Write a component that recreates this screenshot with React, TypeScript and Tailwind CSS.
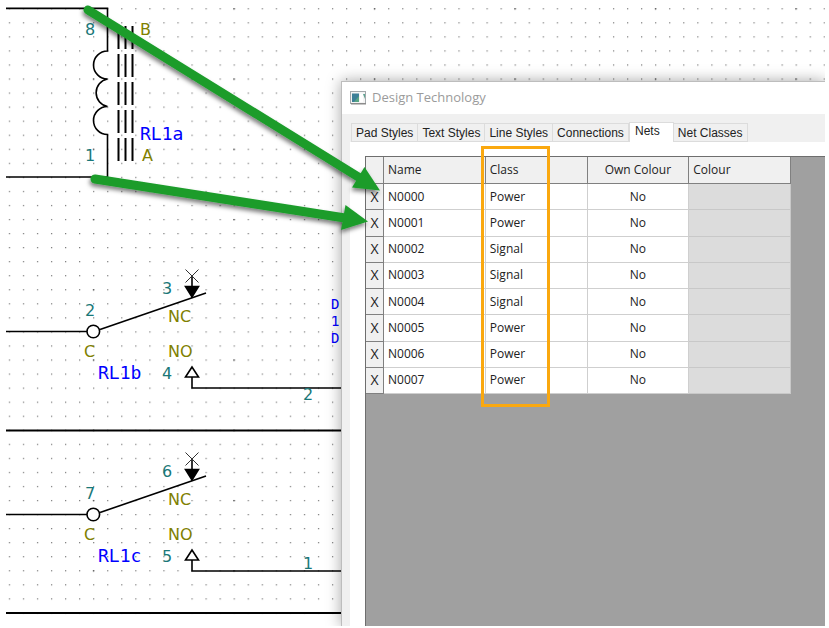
import React from 'react';

interface Net {
  name: string;
  netClass: string;
  ownColour: string;
}

const NETS: Net[] = [
  { name: 'N0000', netClass: 'Power', ownColour: 'No' },
  { name: 'N0001', netClass: 'Power', ownColour: 'No' },
  { name: 'N0002', netClass: 'Signal', ownColour: 'No' },
  { name: 'N0003', netClass: 'Signal', ownColour: 'No' },
  { name: 'N0004', netClass: 'Signal', ownColour: 'No' },
  { name: 'N0005', netClass: 'Power', ownColour: 'No' },
  { name: 'N0006', netClass: 'Power', ownColour: 'No' },
  { name: 'N0007', netClass: 'Power', ownColour: 'No' },
];

const TABS = ['Pad Styles', 'Text Styles', 'Line Styles', 'Connections', 'Nets', 'Net Classes'];

const PIN = 'fill-[#1a7878]';
const TERMINAL = 'fill-[#808000]';
const NAME = "fill-[#0000ff] font-['DejaVu_Sans_Mono',monospace] text-lg";
const CLIPPED_NAME = "fill-[#0000ff] font-['DejaVu_Sans_Mono',monospace] text-sm";

const CORE_BARS = [118.5, 125.5, 132.5];

interface ContactProps {
  y: number;
  name: string;
  common: string;
  closed: string;
  open: string;
}

// Changeover contact, drawn around its common pin at y
const Contact: React.FC<ContactProps> = ({ y, name, common, closed, open }) => {
  return (
    <g transform={`translate(0 ${y})`}>
      <g fill="none" stroke="#000" strokeWidth="1.6">
        <path d="M6 0.5H87" />
        <circle cx="93.3" cy="0.5" r="6.3" fill="#fff" />
        <path d="M100 -1.5L206 -38" />
        <path d="M192 -55V-33" />
        <path d="M185.5 -61.5L198.5 -48.5M198.5 -61.5L185.5 -48.5" stroke="#333" strokeWidth="1" />
        <path d="M185.5 -44.5H198.5L192 -34Z" fill="#000" />
        <path d="M192 36L185.5 46H198.5Z" fill="#fff" />
        <path d="M192 46V57H342" />
      </g>
      <text x="85" y="-15" className={PIN}>{common}</text>
      <text x="162" y="-37" className={PIN}>{closed}</text>
      <text x="162" y="48" className={PIN}>{open}</text>
      <text x="168" y="-9" className={TERMINAL}>NC</text>
      <text x="168" y="26" className={TERMINAL}>NO</text>
      <text x="84" y="26" className={TERMINAL}>C</text>
      <text x="98" y="48" className={NAME}>{name}</text>
    </g>
  );
};

const Schematic: React.FC = () => {
  return (
    <svg className="absolute inset-0 h-full w-full font-['DejaVu_Sans',sans-serif] text-base" aria-label="Schematic">
      <defs>
        <pattern id="grid" x="8.8" y="8.2" width="14.05" height="14.05" patternUnits="userSpaceOnUse">
          <rect width="1.2" height="1.2" fill="#777" />
        </pattern>
        <pattern id="gridMajor" x="92.8" y="8.2" width="140.5" height="70.25" patternUnits="userSpaceOnUse">
          <rect width="1.3" height="1.3" fill="#555" />
        </pattern>
      </defs>
      <rect x="6" y="8" width="820" height="618" fill="url(#grid)" />
      <rect x="6" y="8" width="820" height="618" fill="url(#gridMajor)" />

      {/* relay coil */}
      <g fill="none" stroke="#000" strokeWidth="1.6">
        <path d="M6 8.4H107.5V51A14 14 0 0 0 107.5 79A14 14 0 0 0 107.5 106.5A14 14 0 0 0 107.5 134.5V177H6" />
        {CORE_BARS.map((x) => (
          <path key={x} d={`M${x} 26V161`} strokeWidth="2" strokeDasharray="23 5" />
        ))}
      </g>
      <text x="85" y="35" className={PIN}>8</text>
      <text x="85" y="161" className={PIN}>1</text>
      <text x="140" y="35" className={TERMINAL}>B</text>
      <text x="142" y="161" className={TERMINAL}>A</text>
      <text x="140" y="140" className={NAME}>RL1a</text>

      <Contact y={331} name="RL1b" common="2" closed="3" open="4" />
      <Contact y={514} name="RL1c" common="7" closed="6" open="5" />
      <path d="M6 430.5H342M6 613H342" stroke="#000" strokeWidth="1.8" />

      <text x="303" y="400" className={PIN}>2</text>
      <text x="303" y="569" className={PIN}>1</text>
      <text x="331" y="309" className={CLIPPED_NAME}>D</text>
      <text x="331" y="326" className={CLIPPED_NAME}>1</text>
      <text x="331" y="343" className={CLIPPED_NAME}>D</text>
    </svg>
  );
};

const Arrows: React.FC = () => {
  return (
    <svg className="pointer-events-none absolute inset-0 h-full w-full" aria-hidden="true">
      <defs>
        <filter id="shadow" x="-10%" y="-10%" width="120%" height="130%">
          <feDropShadow dx="-1" dy="3" stdDeviation="2" floodColor="#000" floodOpacity="0.5" />
        </filter>
      </defs>
      <g fill="#1b9c2b" stroke="#1b9c2b" filter="url(#shadow)">
        <path d="M88 10L360 178" strokeWidth="9" strokeLinecap="round" />
        <path d="M380 190.5L364.5 167L352 187.5Z" stroke="none" />
        <path d="M95 179L345 218" strokeWidth="9" strokeLinecap="round" />
        <path d="M368 221.5L345.5 205L341 230Z" stroke="none" />
      </g>
    </svg>
  );
};

const WindowIcon: React.FC = () => {
  return (
    <svg width="16" height="14" viewBox="0 0 16 14" aria-hidden="true">
      <rect x="0.5" y="0.5" width="15" height="12" fill="#f4f4f4" stroke="#a3a8ab" />
      <rect x="1" y="12" width="15" height="1.5" fill="#8c8c8c" />
      <rect x="2" y="2.5" width="7" height="8.5" fill="#3c7f97" />
      <path d="M4 11L9 5V11Z" fill="#58a585" />
      <rect x="10" y="2.5" width="3" height="8.5" fill="#fff" />
      <path d="M13 3H15V8Z" fill="#5da391" />
    </svg>
  );
};

const NetsTable: React.FC = () => {
  const head = 'h-[27px] border-r border-b border-[#808080] bg-[#f0f0f0] px-1 font-normal';
  const cell = 'h-[26px] border-r border-b border-[#cfcfcf] bg-white px-1';

  return (
    <table className="h-[237px] w-[425px] table-fixed border-separate border-spacing-0 text-left font-['Open_Sans',sans-serif] text-xs text-[#222]">
      <colgroup>
        <col className="w-[18px]" />
        <col />
        <col />
        <col />
        <col />
      </colgroup>
      <thead>
        <tr>
          <th className={head} />
          <th className={head}>Name</th>
          <th className={head}>Class</th>
          <th className={`${head} text-center`}>Own Colour</th>
          <th className={head}>Colour</th>
        </tr>
      </thead>
      <tbody>
        {NETS.map((net) => (
          <tr key={net.name}>
            <td className="border-r border-b border-[#808080] bg-[#f0f0f0] text-center text-sm leading-4">X</td>
            <td className={cell}>{net.name}</td>
            <td className={cell}>{net.netClass}</td>
            <td className={`${cell} text-center`}>{net.ownColour}</td>
            <td className="border-r border-b border-[#c8c8c8] bg-[#dcdcdc]" />
          </tr>
        ))}
      </tbody>
    </table>
  );
};

const DesignTechnologyDialog: React.FC = () => {
  return (
    <section
      aria-label="Design Technology"
      className="absolute top-[81px] right-0 bottom-0 left-[341px] flex flex-col border-t border-l border-[#bdbdbd] bg-[#f0f0f0] shadow-[0_0_14px_rgba(0,0,0,0.35)]"
    >
      <header className="flex h-8 shrink-0 items-center gap-1.5 bg-white pl-2">
        <WindowIcon />
        <h1 className="font-['Open_Sans',sans-serif] text-[13px] text-[#9b9b9b]">Design Technology</h1>
      </header>

      <div className="flex items-end pt-2 pl-[9px] font-['Liberation_Sans',sans-serif] text-xs text-[#222]" role="tablist">
        {TABS.map((tab) =>
          tab === 'Nets' ? (
            <button key={tab} role="tab" aria-selected="true" className="h-5 w-[45px] border-t border-x border-[#dcdcdc] bg-white pr-2 pb-1">
              {tab}
            </button>
          ) : (
            <button key={tab} role="tab" aria-selected="false" className="h-[19px] border-t border-r border-b border-[#dcdcdc] px-1 whitespace-nowrap first:border-l">
              {tab}
            </button>
          )
        )}
      </div>

      <div className="ml-2 flex grow bg-white pt-3.5 pl-[15px]" role="tabpanel">
        <div className="relative grow border-t border-l border-[#6e6e6e] bg-[#a0a0a0]">
          <NetsTable />
          {/* highlight over the Class column */}
          <div className="pointer-events-none absolute -top-[11px] left-[115px] h-[261px] w-[69px] border-[3px] border-[#faa80f]" />
        </div>
      </div>
    </section>
  );
};

const App: React.FC = () => {
  return (
    <main className="flex min-h-screen bg-white pr-1 pb-0.5">
      <div className="relative grow overflow-hidden">
        <Schematic />
        <DesignTechnologyDialog />
        <Arrows />
      </div>
    </main>
  );
};

export default App;
